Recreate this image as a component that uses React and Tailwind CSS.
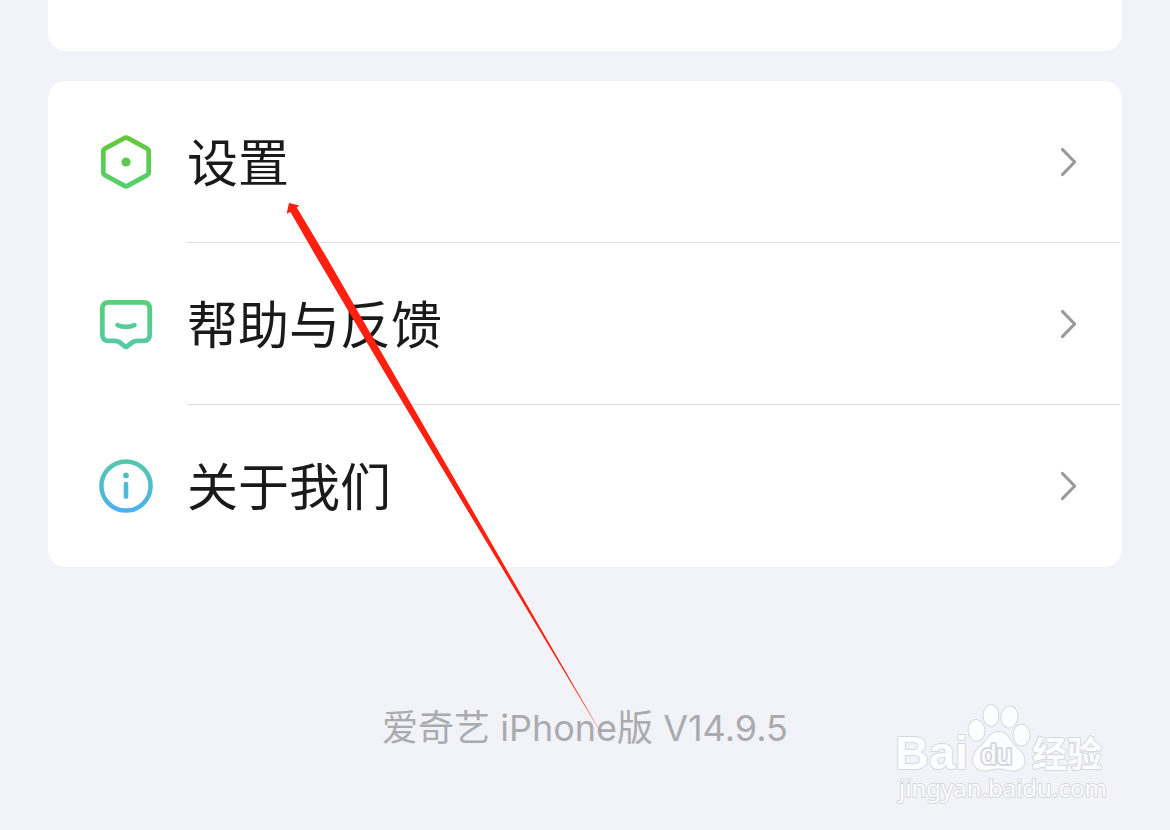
import React from 'react';

const SettingsIcon = () => (
  <svg width="56" height="56" viewBox="0 0 56 56" fill="none" aria-hidden="true">
    <defs>
      <linearGradient id="settingsFill" x1="0" y1="0" x2="0" y2="56" gradientUnits="userSpaceOnUse">
        <stop stopColor="#66c834" />
        <stop offset="1" stopColor="#54cf73" />
      </linearGradient>
    </defs>
    <path
      d="M26.6 4 L6.8 14.6 Q5.3 15.4 5.3 17.1 V38.7 Q5.3 40.4 6.8 41.2 L26.6 51.9 Q28 52.6 29.4 51.9 L49.2 41.2 Q50.7 40.4 50.7 38.7 V17.1 Q50.7 15.4 49.2 14.6 L29.4 4 Q28 3.3 26.6 4 Z"
      stroke="url(#settingsFill)"
      strokeWidth="4.8"
    />
    <circle cx="28" cy="28" r="4.6" fill="#5acb50" />
  </svg>
);

const FeedbackIcon = () => (
  <svg width="56" height="56" viewBox="0 0 56 56" fill="none" aria-hidden="true">
    <defs>
      <linearGradient id="feedbackFill" x1="0" y1="4" x2="0" y2="54" gradientUnits="userSpaceOnUse">
        <stop stopColor="#56d078" />
        <stop offset="1" stopColor="#56c8aa" />
      </linearGradient>
    </defs>
    <path
      d="M10.5 6.3 H45.5 Q51.7 6.3 51.7 12.5 V38.5 Q51.7 44.8 45.5 44.8 H39.5 Q36.6 44.8 34.8 46 L29.4 50.2 Q28 51.2 26.6 50.2 L21.2 46 Q19.4 44.8 16.5 44.8 H10.5 Q4.3 44.8 4.3 38.5 V12.5 Q4.3 6.3 10.5 6.3 Z"
      stroke="url(#feedbackFill)"
      strokeWidth="4.8"
      strokeLinejoin="round"
    />
    <path d="M19.5 29.2 Q28 32.6 36.5 29.2" stroke="#56cc96" strokeWidth="4.6" strokeLinecap="round" />
  </svg>
);

const AboutIcon = () => (
  <svg width="56" height="56" viewBox="0 0 56 56" fill="none" aria-hidden="true">
    <defs>
      <linearGradient id="aboutFill" x1="0" y1="2" x2="0" y2="54" gradientUnits="userSpaceOnUse">
        <stop stopColor="#56c8a8" />
        <stop offset="1" stopColor="#4db0f0" />
      </linearGradient>
    </defs>
    <circle cx="28" cy="28" r="24.6" stroke="url(#aboutFill)" strokeWidth="4.5" />
    <circle cx="28" cy="17.4" r="2.9" fill="#53c0bf" />
    <path d="M28 26 V38.6" stroke="#50b9d6" strokeWidth="4.6" strokeLinecap="round" />
  </svg>
);

const Chevron = () => (
  <svg width="20" height="32" viewBox="0 0 20 32" fill="none" aria-hidden="true">
    <path d="M3.5 3.5 L15.7 16 L3.5 28.5" stroke="#999" strokeWidth="3.2" strokeLinecap="round" strokeLinejoin="round" />
  </svg>
);

const items = [
  { label: '设置', href: '#settings', Icon: SettingsIcon },
  { label: '帮助与反馈', href: '#feedback', Icon: FeedbackIcon },
  { label: '关于我们', href: '#about', Icon: AboutIcon },
];

const MenuRow = ({ label, href, Icon }) => (
  <li className="group">
    <a href={href} className="flex h-[162px] items-center pr-[2px]">
      <span className="w-[139px] shrink-0 pl-[50px]">
        <Icon />
      </span>
      <span className="flex h-full flex-1 items-center justify-between border-b border-[#dedede] pr-[41px] group-last:border-b-0">
        <span className="pt-1 text-[51px] leading-[72px] text-[#1a1a1a]">{label}</span>
        <Chevron />
      </span>
    </a>
  </li>
);

// Long tapered pointer towards the first row
const Pointer = () => (
  <svg
    className="pointer-events-none absolute left-[286px] top-[203px]"
    width="320"
    height="536"
    viewBox="286 203 320 536"
    aria-hidden="true"
  >
    <path
      d="M289 203 L299.5 205.6 L296.8 207.6 L327 258 L391.6 370 L604 738 L383.2 370 L317 258 L290.4 212 L286.6 213.7 Z"
      fill="#ff2010"
    />
  </svg>
);

const Watermark = () => (
  <svg
    className="pointer-events-none absolute bottom-[18px] right-[54px]"
    width="226"
    height="116"
    viewBox="890 696 226 116"
    fill="#fcfdfe"
    stroke="#d6d8dc"
    strokeWidth="2"
    strokeLinejoin="round"
    paintOrder="stroke"
  >
    <text x="895" y="769" fontSize="47" fontWeight="700" fontFamily="'Liberation Sans', sans-serif">Bai</text>
    <ellipse cx="976.5" cy="730.5" rx="8" ry="10.5" transform="rotate(-6 976.5 730.5)" />
    <ellipse cx="991" cy="715.5" rx="7.5" ry="10.5" />
    <ellipse cx="1009.5" cy="717" rx="8" ry="10.5" transform="rotate(8 1009.5 717)" />
    <ellipse cx="1021.5" cy="735" rx="8" ry="10.5" />
    <path d="M998.500 732 C1006 732 1009 738 1013 744 C1018 749 1025 754 1024.500 761 C1024 768 1018 771.500 1011 770.500 C1005 769.500 1002 768.500 998 768.500 C994 768.500 990 770 985 770.500 C978 771 973 766 973 759.500 C973 752 979 748 984 743 C988 738 991 732 998.500 732 Z" />
    <text x="981" y="764" fontSize="28" fontFamily="'Liberation Sans', sans-serif" strokeWidth="4">du</text>
    <text x="1032" y="767" fontSize="35" fontWeight="700" fontFamily="'Noto Sans CJK SC', sans-serif">经验</text>
    <text x="899" y="797" fontSize="24" fontFamily="'Noto Sans', sans-serif">jingyan.baidu.com</text>
  </svg>
);

export default function App() {
  return (
    <main className="relative min-h-screen overflow-hidden bg-[#f2f3f8] px-12 font-[Inter,'Noto_Sans_CJK_SC',sans-serif]">
      <div className="h-[51px] rounded-b-[18px] bg-white" />

      <ul className="mt-[30px] rounded-[18px] bg-white">
        {items.map((item) => (
          <MenuRow key={item.href} {...item} />
        ))}
      </ul>

      <p className="mt-[135px] text-center text-[36px] leading-[52px] text-[#aaabaf]">爱奇艺 iPhone版 V14.9.5</p>

      <Pointer />
      <Watermark />
    </main>
  );
}
